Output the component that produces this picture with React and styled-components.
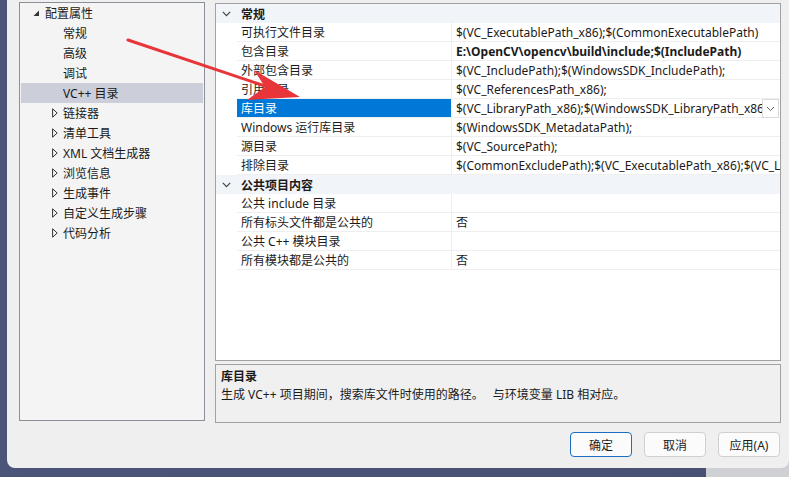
import React from 'react'
import styled, { createGlobalStyle } from 'styled-components'

const GlobalStyle = createGlobalStyle`
  html, body {
    margin: 0;
    padding: 0;
  }
  body {
    width: 789px;
    height: 477px;
    overflow: hidden;
    font-family: "Noto Sans", "Noto Sans CJK SC", sans-serif;
    font-size: 12px;
    color: #1b1b1b;
  }
`

const treeItems = [
  { label: '配置属性', level: 0, open: true },
  { label: '常规', level: 1 },
  { label: '高级', level: 1 },
  { label: '调试', level: 1 },
  { label: 'VC++ 目录', level: 1, selected: true },
  { label: '链接器', level: 1, collapsed: true },
  { label: '清单工具', level: 1, collapsed: true },
  { label: 'XML 文档生成器', level: 1, collapsed: true },
  { label: '浏览信息', level: 1, collapsed: true },
  { label: '生成事件', level: 1, collapsed: true },
  { label: '自定义生成步骤', level: 1, collapsed: true },
  { label: '代码分析', level: 1, collapsed: true },
]

const groups = [
  {
    title: '常规',
    rows: [
      { name: '可执行文件目录', value: '$(VC_ExecutablePath_x86);$(CommonExecutablePath)' },
      { name: '包含目录', value: 'E:\\OpenCV\\opencv\\build\\include;$(IncludePath)', bold: true },
      { name: '外部包含目录', value: '$(VC_IncludePath);$(WindowsSDK_IncludePath);' },
      { name: '引用目录', value: '$(VC_ReferencesPath_x86);' },
      { name: '库目录', value: '$(VC_LibraryPath_x86);$(WindowsSDK_LibraryPath_x86)', selected: true },
      { name: 'Windows 运行库目录', value: '$(WindowsSDK_MetadataPath);' },
      { name: '源目录', value: '$(VC_SourcePath);' },
      { name: '排除目录', value: '$(CommonExcludePath);$(VC_ExecutablePath_x86);$(VC_LibraryPath_x86)' },
    ],
  },
  {
    title: '公共项目内容',
    rows: [
      { name: '公共 include 目录', value: '' },
      { name: '所有标头文件都是公共的', value: '否' },
      { name: '公共 C++ 模块目录', value: '' },
      { name: '所有模块都是公共的', value: '否' },
    ],
  },
]

function Chevron() {
  return (
    <svg width="9" height="6" viewBox="0 0 9 6">
      <path d="M0.8 0.8 L4.5 4.6 L8.2 0.8" fill="none" stroke="#444" strokeWidth="1.2" />
    </svg>
  )
}

function App() {
  return (
    <Screen>
      <GlobalStyle />
      <Dialog>
        <Main>
          <Tree>
            {treeItems.map(item => (
              <TreeRow key={item.label} selected={item.selected}>
                <Toggle level={item.level}>
                  {item.open && (
                    <svg width="7" height="7" viewBox="0 0 7 7">
                      <path d="M6 0.5 L6 6 L0.5 6 Z" fill="#333" />
                    </svg>
                  )}
                  {item.collapsed && (
                    <svg width="6" height="10" viewBox="0 0 6 10">
                      <path d="M0.6 0.8 L5.2 5 L0.6 9.2 Z" fill="none" stroke="#333" strokeWidth="1" />
                    </svg>
                  )}
                </Toggle>
                <span>{item.label}</span>
              </TreeRow>
            ))}
          </Tree>
          <RightColumn>
            <Grid>
              {groups.map(group => (
                <React.Fragment key={group.title}>
                  <GroupHeader>
                    <Gutter>
                      <Chevron />
                    </Gutter>
                    <GroupTitle>{group.title}</GroupTitle>
                  </GroupHeader>
                  {group.rows.map(row => (
                    <PropRow key={row.name}>
                      <Gutter />
                      <NameCell selected={row.selected}>{row.name}</NameCell>
                      <ValueCell bold={row.bold}>
                        <ValueText>{row.value}</ValueText>
                        {row.selected && (
                          <DropButton>
                            <svg width="9" height="6" viewBox="0 0 9 6">
                              <path d="M1 1 L4.5 4.5 L8 1" fill="none" stroke="#666" strokeWidth="1" />
                            </svg>
                          </DropButton>
                        )}
                      </ValueCell>
                    </PropRow>
                  ))}
                </React.Fragment>
              ))}
            </Grid>
            <Description>
              <DescTitle>库目录</DescTitle>
              <DescText>生成 VC++ 项目期间，搜索库文件时使用的路径。{'\u3000'} 与环境变量 LIB 相对应。</DescText>
            </Description>
            <Footer>
              <Button primary>确定</Button>
              <Button>取消</Button>
              <Button>应用(A)</Button>
            </Footer>
          </RightColumn>
        </Main>
      </Dialog>
      <Arrow width="789" height="477" viewBox="0 0 789 477">
        <line x1="128" y1="40" x2="268" y2="87" stroke="#e8353a" strokeWidth="3" strokeLinecap="round" />
        <path d="M300 97 L254 70 L265 87 L247 100 Z" fill="#e8353a" />
      </Arrow>
    </Screen>
  )
}

export default App

const Screen = styled.div`
position: relative;
width: 789px;
height: 477px;
background: linear-gradient(to right, #4b5479 0, #485073 706px, #cfd0d3 706px);
overflow: hidden;
`
const Dialog = styled.div`
margin-left: 7px;
width: 782px;
height: 468px;
box-sizing: border-box;
background-color: #efefef;
border-bottom-left-radius: 8px;
border-bottom-right-radius: 8px;
padding: 2px 8px 0 12px;
`
const Main = styled.div`
display: flex;
gap: 10px;
`
const Tree = styled.div`
width: 186px;
height: 419px;
box-sizing: border-box;
border: 1px solid #8b8f97;
background-color: #f4f4f4;
padding: 0 1px;
`
const TreeRow = styled.div`
display: flex;
align-items: center;
height: 20px;
line-height: 21px;
white-space: nowrap;
background-color: ${p => (p.selected ? '#ccceda' : 'transparent')};
color: #1a1a1a;
`
const Toggle = styled.span`
display: inline-flex;
align-items: center;
justify-content: center;
width: 12px;
height: 20px;
margin-left: ${p => (p.level === 0 ? '9px' : '28px')};
margin-right: ${p => (p.level === 0 ? '3px' : '2px')};
`
const RightColumn = styled.div`
display: flex;
flex-direction: column;
width: 566px;
`
const Grid = styled.div`
margin-top: 1px;
height: 358px;
box-sizing: border-box;
border: 1px solid #a2a2a2;
background-color: #ffffff;
overflow: hidden;
`
const GroupHeader = styled.div`
display: flex;
align-items: center;
height: 19px;
background-color: #f1f4f9;
`
const Gutter = styled.div`
display: flex;
align-items: center;
justify-content: center;
width: 20px;
height: 100%;
flex-shrink: 0;
padding-right: 1px;
`
const GroupTitle = styled.div`
padding-left: 4px;
padding-top: 2px;
font-weight: bold;
line-height: 19px;
`
const PropRow = styled.div`
display: flex;
height: 19px;
`
const NameCell = styled.div`
width: 210px;
height: 18px;
flex-shrink: 0;
padding-left: 4px;
line-height: 20px;
border-bottom: 1px solid #efefef;
border-right: 1px solid #efefef;
white-space: nowrap;
overflow: hidden;
background-color: ${p => (p.selected ? '#0078d7' : '#ffffff')};
color: ${p => (p.selected ? '#ffffff' : '#1b1b1b')};
`
const ValueCell = styled.div`
flex: 1;
min-width: 0;
height: 18px;
padding-left: 4px;
line-height: 20px;
border-bottom: 1px solid #efefef;
font-weight: ${p => (p.bold ? 'bold' : 'normal')};
display: flex;
`
const ValueText = styled.div`
flex: 1;
min-width: 0;
white-space: nowrap;
overflow: hidden;
`
const DropButton = styled.div`
display: flex;
align-items: center;
justify-content: center;
width: 15px;
height: 17px;
margin-right: 1px;
border: 1px solid #dadada;
background-color: #ffffff;
flex-shrink: 0;
`
const Description = styled.div`
margin-top: 3px;
height: 59px;
box-sizing: border-box;
border: 1px solid #a2a2a2;
background-color: #f0f0f0;
padding: 3px 5px;
line-height: 18px;
`
const DescTitle = styled.div`
font-weight: bold;
`
const DescText = styled.div`
white-space: pre;
`
const Footer = styled.div`
display: flex;
justify-content: flex-end;
gap: 12px;
padding-top: 9px;
padding-right: 1px;
`
const Button = styled.button`
width: 62px;
height: 25px;
box-sizing: border-box;
border: 1px solid ${p => (p.primary ? '#1a6fc4' : '#d0d0d0')};
border-radius: 4px;
background-color: #fbfbfb;
font-family: "Noto Sans", "Noto Sans CJK SC", sans-serif;
font-size: 12px;
color: #1b1b1b;
padding: 0;
`
const Arrow = styled.svg`
position: absolute;
left: 0;
top: 0;
pointer-events: none;
`
